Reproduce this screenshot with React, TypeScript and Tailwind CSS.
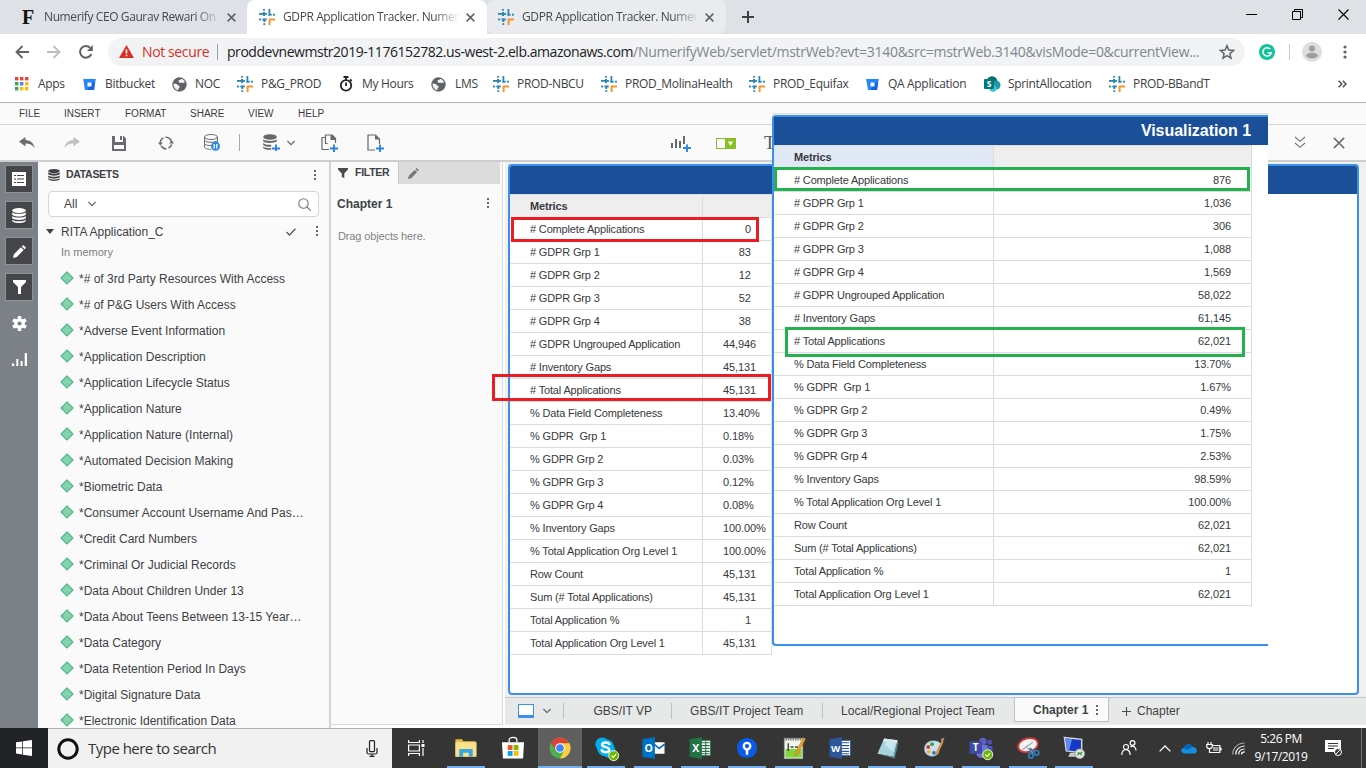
import React from "react";

type Row = [string, string];

const SEGOE = "font-['Open_Sans','Noto_Sans',sans-serif]";

const leftRows: Row[] = [
  ["# Complete Applications", "0"],
  ["# GDPR Grp 1", "83"],
  ["# GDPR Grp 2", "12"],
  ["# GDPR Grp 3", "52"],
  ["# GDPR Grp 4", "38"],
  ["# GDPR Ungrouped Application", "44,946"],
  ["# Inventory Gaps", "45,131"],
  ["# Total Applications", "45,131"],
  ["% Data Field Completeness", "13.40%"],
  ["% GDPR  Grp 1", "0.18%"],
  ["% GDPR Grp 2", "0.03%"],
  ["% GDPR Grp 3", "0.12%"],
  ["% GDPR Grp 4", "0.08%"],
  ["% Inventory Gaps", "100.00%"],
  ["% Total Application Org Level 1", "100.00%"],
  ["Row Count", "45,131"],
  ["Sum (# Total Applications)", "45,131"],
  ["Total Application %", "1"],
  ["Total Application Org Level 1", "45,131"],
];

const rightValues = [
  "876", "1,036", "306", "1,088", "1,569", "58,022", "61,145", "62,021", "13.70%", "1.67%",
  "0.49%", "1.75%", "2.53%", "98.59%", "100.00%", "62,021", "62,021", "1", "62,021",
];

const attributes = [
  "*# of 3rd Party Resources With Access",
  "*# of P&G Users With Access",
  "*Adverse Event Information",
  "*Application Description",
  "*Application Lifecycle Status",
  "*Application Nature",
  "*Application Nature (Internal)",
  "*Automated Decision Making",
  "*Biometric Data",
  "*Consumer Account Username And Pas…",
  "*Credit Card Numbers",
  "*Criminal Or Judicial Records",
  "*Data About Children Under 13",
  "*Data About Teens Between 13-15 Year…",
  "*Data Category",
  "*Data Retention Period In Days",
  "*Digital Signature Data",
  "*Electronic Identification Data",
];

/* ---------- small icons ---------- */

const Numerify = () => (
  <svg width="16" height="16" viewBox="0 0 16 16" className="shrink-0">
    <g fill="#2a86b8">
      <rect x="4" y="0" width="2" height="1.6" />
      <rect x="4" y="3" width="2" height="4" />
      <rect x="0" y="4" width="8" height="1.8" />
      <rect x="9.5" y="0" width="1.8" height="6.5" />
      <rect x="9.5" y="4.8" width="3.2" height="1.8" />
      <rect x="14" y="4.8" width="2" height="1.8" />
      <rect x="0" y="9.6" width="2" height="1.8" />
      <rect x="3.4" y="9.6" width="4.4" height="1.8" />
      <rect x="4.4" y="9.6" width="1.8" height="3.4" />
      <rect x="4.4" y="14.2" width="1.8" height="1.8" />
    </g>
    <path d="M9.6 9.4H16v2h-4.4V16h-2z" fill="#f7952b" />
  </svg>
);

const Apps = () => (
  <svg width="14" height="14" viewBox="0 0 14 14">
    {["#ea4335", "#ea4335", "#ea4335", "#34a853", "#4285f4", "#fbbc04", "#34a853", "#fbbc04", "#fbbc04"].map((c, i) => (
      <rect key={i} x={(i % 3) * 5} y={Math.floor(i / 3) * 5} width="3.4" height="3.4" fill={c} />
    ))}
  </svg>
);

const Bitbucket = () => (
  <svg width="13" height="13" viewBox="0 0 13 13">
    <path d="M.2 1h12.6L11 12H2z" fill="#2684ff" />
    <path d="M8.6 4.6h3.5L11 12H4.8z" fill="#1a62db" />
    <rect x="4.5" y="4.6" width="4" height="3.8" fill="#fff" />
  </svg>
);

const Globe = () => (
  <svg width="15" height="15" viewBox="0 0 15 15">
    <circle cx="7.5" cy="7.5" r="7.2" fill="#5f6368" />
    <path d="M1.600 6.500l3 .4c1.300.3.9 1.600 2.300 1.900 1.300.3.7 1.900.1 2.300-.7.5-.5 1.700-1 2.100C2.800 12.200 1.200 9.500 1.600 6.500zM7.200 3c1.500.1 1.200-1.300 2.600-1.100 1.500.6 2.700 1.800 3.200 3.400-.9.1-1.300.9-2.400.6-1.300-.4-3 .5-3.700-.7C6.500 4.200 6.400 3.200 7.200 3z" fill="#f4f4f4" />
  </svg>
);

const Stopwatch = () => (
  <svg width="14" height="16" viewBox="0 0 14 16" fill="none" stroke="#222" strokeWidth="1.8">
    <circle cx="7" cy="9.4" r="5.2" />
    <path d="M4.500 1h5M7 1v3M7 6.500v3.500M11 3.500l1.700 1.500" />
  </svg>
);

const SharePoint = () => (
  <svg width="17" height="16" viewBox="0 0 17 16">
    <circle cx="8" cy="5.500" r="5.300" fill="#036c70" />
    <circle cx="12" cy="9" r="4.500" fill="#1a9ba1" />
    <circle cx="9" cy="12.300" r="3.500" fill="#37c6d0" />
    <rect y="3" width="10" height="10" rx="1" fill="#03787c" />
    <text x="5" y="11" fontSize="8.500" fontWeight="700" fill="#fff" textAnchor="middle" fontFamily="Open Sans">S</text>
  </svg>
);

const Kebab = ({ c = "#66696c" }: { c?: string }) => (
  <svg width="2" height="11" viewBox="0 0 2 11" fill={c} className="shrink-0">
    <rect y="0" width="2" height="2" /><rect y="4" width="2" height="2" /><rect y="8" width="2" height="2" />
  </svg>
);

const Chevron = ({ c = "#66696c" }: { c?: string }) => (
  <svg width="8" height="6" viewBox="0 0 8 6" fill="none" stroke={c} strokeWidth="1.200" className="shrink-0"><path d="M.4 1l3.600 3.600L7.600 1" /></svg>
);

const Close = ({ c = "#5f6368", s = 9, w = 1.700 }: { c?: string; s?: number; w?: number }) => (
  <svg width={s} height={s} viewBox="0 0 10 10" stroke={c} strokeWidth={w} className="shrink-0"><path d="M.7.7l8.600 8.600M9.300.7L.7 9.300" /></svg>
);

const Cylinder = ({ c, w = 12, h = 12 }: { c: string; w?: number; h?: number }) => (
  <svg width={w} height={h} viewBox="0 0 12 12" fill={c} preserveAspectRatio="none" className="shrink-0">
    <ellipse cx="6" cy="2" rx="5.800" ry="2" />
    <path d="M.2 3.300C1.800 5 10.200 5 11.800 3.300v2C10.200 7.200 1.800 7.200.2 5.300zM.2 6.400c1.600 1.700 10 1.700 11.600 0v1.800c-1.600 1.800-10 1.800-11.600 0zM.2 9.300c1.600 1.700 10 1.700 11.600 0v1c-1.600 2.200-10 2.200-11.600 0z" />
  </svg>
);

/* ---------- browser chrome ---------- */

const tabText = `${SEGOE} text-[12px] whitespace-pre text-[#45494d] tracking-[-0.400px] [mask-image:linear-gradient(to_right,#000_85%,transparent)]`;

const TabStrip = () => (
  <div className="flex h-[34px] shrink-0 bg-[#dee1e6]">
    <div className="flex w-[247px] items-center pl-[22px]">
      <span className="w-[22px] font-['Liberation_Serif',serif] text-[20px] leading-none font-bold text-[#111]">F</span>
      <span className={`${tabText} w-[177px]`}>Numerify CEO Gaurav Rewari On</span>
      <span className="ml-[6px]"><Close /></span>
    </div>
    <div className="flex w-[240px] items-center rounded-t-lg bg-white pl-3">
      <Numerify />
      <span className={`${tabText} ml-2 w-[177px]`}>GDPR Application Tracker. Numer</span>
      <span className="ml-[6px]"><Close /></span>
    </div>
    <div className="flex w-[239px] items-center rounded-lg bg-[#e9ebef] pl-[11px]">
      <Numerify />
      <span className={`${tabText} ml-2 w-[177px]`}>GDPR Application Tracker. Numer</span>
      <span className="ml-[6px]"><Close /></span>
    </div>
    <svg className="mt-[11px] ml-4" width="12" height="12" viewBox="0 0 12 12" stroke="#3c4043" strokeWidth="2"><path d="M6 0v12M0 6h12" /></svg>
    <div className="mt-[9px] ml-auto flex h-[11px] gap-[35px] pr-[17px]">
      <svg width="11" height="11" stroke="#000"><path d="M0 5.500h11" /></svg>
      <svg width="11" height="11" viewBox="0 0 11 11" fill="none" stroke="#000"><path d="M.5 2.500h8v8h-8zM2.500 2.500v-2h8v8h-2" /></svg>
      <svg width="11" height="11" stroke="#000" strokeWidth="1.100"><path d="M.5.5l10 10M10.500.5l-10 10" /></svg>
    </div>
  </div>
);

const AddressRow = () => (
  <div className="flex h-[36px] shrink-0 items-center bg-white">
    <svg className="ml-[15px]" width="14" height="14" viewBox="0 0 14 14" fill="none" stroke="#5f6368" strokeWidth="1.800"><path d="M14 7H1.500M7.500 1L1.500 7l6 6" /></svg>
    <svg className="ml-[18px]" width="14" height="14" viewBox="0 0 14 14" fill="none" stroke="#bcbec0" strokeWidth="1.800"><path d="M0 7h12.500M6.500 1l6 6-6 6" /></svg>
    <svg className="ml-[18px]" width="14" height="14" viewBox="0 0 14 14" fill="none" stroke="#5f6368" strokeWidth="2"><path d="M12.300 9A5.800 5.800 0 1 1 11.200 2.900" /><path d="M13.800 0v6H8z" fill="#5f6368" stroke="none" /></svg>
    <div className={`ml-[15px] flex h-7 w-[1137px] items-center rounded-full bg-[#f1f3f4] text-[14px] ${SEGOE}`}>
      <svg className="mb-px ml-[11px] shrink-0" width="15" height="13" viewBox="0 0 15 13"><path d="M7.500 0L15 13H0z" fill="#d93025" /><path d="M7.500 4.500v4M7.500 9.700v1.500" stroke="#fff" strokeWidth="1.600" /></svg>
      <span className="ml-[8px] w-[75px] shrink-0 pb-px whitespace-nowrap text-[#d93025] tracking-[-0.380px]">Not secure</span>
      <span className="h-4 w-px shrink-0 bg-[#9aa0a6]" />
      <span className="ml-[9px] w-[990px] pb-px whitespace-nowrap text-[#202124] tracking-[-0.450px]">
        proddevnewmstr2019-1176152782.us-west-2.elb.amazonaws.com<span className="tracking-[-0.280px] text-[#80868b]">/NumerifyWeb/servlet/mstrWeb?evt=3140&amp;src=mstrWeb.3140&amp;visMode=0&amp;currentView...</span>
      </span>
      <svg className="mr-[10px] ml-auto shrink-0" width="16" height="16" viewBox="0 0 16 16" fill="none" stroke="#5f6368" strokeWidth="1.500"><path d="M8 1.700l1.800 4.400 4.700.4-3.600 3.100 1.100 4.600L8 11.700l-4 2.500 1.100-4.600L1.500 6.500l4.700-.4z" /></svg>
    </div>
    <svg className="ml-[14px]" width="16" height="16" viewBox="0 0 16 16" fill="none"><circle cx="8" cy="8" r="8" fill="#15c39a" /><path d="M11.200 5A4.200 4.200 0 1 0 12 9.500V8.700H8.600" stroke="#fff" strokeWidth="1.500" /></svg>
    <span className="ml-[14px] h-4 w-px bg-[#c8cacd]" />
    <svg className="ml-[12px]" width="20" height="20" viewBox="0 0 20 20"><circle cx="10" cy="10" r="10" fill="#dedede" /><circle cx="10" cy="6.500" r="3" fill="#9c9ea1" /><path d="M4 13.500c1-3.700 11-3.700 12 0-1.500 4-10.500 4-12 0z" fill="#9c9ea1" /></svg>
    <svg className="ml-[21px]" width="4" height="14" fill="#5f6368"><circle cx="2" cy="2" r="1.600" /><circle cx="2" cy="7" r="1.600" /><circle cx="2" cy="12" r="1.600" /></svg>
  </div>
);

const bookmarks: [string, React.ReactNode, string, string][] = [
  ["Apps", <Apps />, "w-[68px]", "w-[23px]"],
  ["Bitbucket", <Bitbucket />, "w-[89px]", "w-[22px]"],
  ["NOC", <Globe />, "w-[65px]", "w-[23px]"],
  ["P&G_PROD", <Numerify />, "w-[102px]", "w-[24px]"],
  ["My Hours", <Stopwatch />, "w-[92px]", "w-[23px]"],
  ["LMS", <Globe />, "w-[62px]", "w-[24px]"],
  ["PROD-NBCU", <Numerify />, "w-[108px]", "w-[24px]"],
  ["PROD_MolinaHealth", <Numerify />, "w-[148px]", "w-[24px]"],
  ["PROD_Equifax", <Numerify />, "w-[117px]", "w-[24px]"],
  ["QA Application", <Bitbucket />, "w-[118px]", "w-[22px]"],
  ["SprintAllocation", <SharePoint />, "w-[125px]", "w-[24px]"],
  ["PROD-BBandT", <Numerify />, "w-[120px]", "w-[24px]"],
];

const Bookmarks = () => (
  <div className={`flex h-[32px] shrink-0 items-center bg-white pb-[4px] pl-[15px] text-[12px] tracking-[-0.320px] text-[#3c4043] ${SEGOE}`}>
    {bookmarks.map(([t, icon, w, iw]) => (
      <div key={t} className={`flex shrink-0 items-center ${w}`}>
        <span className={`flex shrink-0 ${iw}`}>{icon}</span>
        <span className="whitespace-nowrap">{t}</span>
      </div>
    ))}
    <svg className="mr-[19px] ml-auto" width="9" height="8" viewBox="0 0 9 8" fill="none" stroke="#4c5054" strokeWidth="1.500"><path d="M.6.8L3.800 4 .6 7.200M4.800.8L8 4 4.800 7.200" /></svg>
  </div>
);

/* ---------- application bars ---------- */

const menus: [string, string][] = [["FILE", "w-[45px]"], ["INSERT", "w-[61px]"], ["FORMAT", "w-[65px]"], ["SHARE", "w-[58px]"], ["VIEW", "w-[50px]"], ["HELP", "w-[40px]"]];

const MenuBar = () => (
  <div className="flex h-[23px] shrink-0 items-center border-t border-b border-t-[#b3b3b3] border-b-[#d6d6d6] bg-[#fafafa] pl-[19px] text-[10px] text-[#3a3d40]">
    {menus.map(([m, w]) => <span key={m} className={w}>{m}</span>)}
  </div>
);

const Plus = () => <path d="M13 10.500v8M9 14.500h8" stroke="#2b83dd" strokeWidth="1.900" />;

const Toolbar = () => (
  <div className="flex h-[37px] shrink-0 items-center border-b-2 border-[#cfcfcf] bg-[#fafafa]">
    <svg className="ml-[19px]" width="16" height="14" viewBox="0 0 16 14" fill="#6b6d70"><path d="M0 5.500L6.500 1v3c5 .3 8 3 9.300 8C13 8.700 10 7.300 6.500 7.500v3z" /></svg>
    <svg className="ml-[29px]" width="16" height="14" viewBox="0 0 16 14" fill="#bfc0c1"><path d="M16 5.500L9.500 1v3c-5 .3-8 3-9.300 8C3 8.700 6 7.300 9.500 7.500v3z" /></svg>
    <svg className="mt-px ml-[32px]" width="14" height="15" viewBox="0 0 14 15"><path d="M0 0h3v6h8V0h.8L14 2.500V15H0z" fill="#696b6e" /><path d="M8 0h2v4H8z" fill="#696b6e" /><path d="M2 9h10v4H2z" fill="#fafafa" /></svg>
    <svg className="ml-[32px]" width="16" height="16" viewBox="0 0 16 16" fill="none" stroke="#6b6d70" strokeWidth="1.500"><path d="M2.300 8.500A5.700 5.700 0 0 1 5.500 2.900M7.500 2.300A5.700 5.700 0 0 1 13.700 7.500M13.600 9.500A5.700 5.700 0 0 1 10.500 13.100M8.500 13.700A5.700 5.700 0 0 1 3.200 11" /><path d="M0 7.500h4.800L2.400 10.700zM16 8.500h-4.800L13.600 5.300z" fill="#6b6d70" stroke="none" /></svg>
    <svg className="ml-[30px]" width="17" height="17" viewBox="0 0 17 17" fill="none" stroke="#6b6d70"><ellipse cx="7" cy="3" rx="6.500" ry="2.500" /><path d="M.5 3v10c0 1.400 3 2.300 6.500 2.300M13.500 3v6M.5 6.300C2 9 12 9 13.500 6.300M.5 9.700c1 1.500 4 2 6.500 1.800" /><circle cx="11.500" cy="12.200" r="4.500" fill="#2f87e3" stroke="none" /><path d="M10.200 10v4.500M12.800 10v4.500" stroke="#fff" strokeWidth="1.300" /></svg>
    <span className="ml-[18px] h-[17px] w-px bg-[#a9a9a9]" />
    <svg className="ml-[23px]" width="17" height="17" viewBox="0 0 17 17"><g fill="#66686b"><ellipse cx="7" cy="3" rx="6.800" ry="2.700" /><path d="M.2 5.300c1.500 2.300 12 2.300 13.600 0v2C12 9.200 2 9.600.2 7.300zM.2 9c1.500 1.700 5 2 8 1.700v2c-3 .4-6.500 0-8-1.600zM.2 12.500c1.500 1.500 5 1.700 8 1.500v1.700c-4 .3-7-.4-8-1.700z" /></g><Plus /></svg>
    <span className="mt-px ml-[7px]"><Chevron /></span>
    <svg className="ml-[26px]" width="18" height="18" viewBox="0 0 18 18" fill="none" stroke="#66686b" strokeWidth="1.200"><path d="M4.500 3.500H1v12h7M4.500 10V1h6.700L14.500 4.500V9M4.500 9.500h2" /><path d="M9.500 1h2l3 3v2H9.500z" fill="#66686b" stroke="none" /><Plus /></svg>
    <svg className="ml-[28px]" width="17" height="18" viewBox="0 0 17 18" fill="none" stroke="#66686b" strokeWidth="1.200"><path d="M8 16H1V1h7.500L12.500 5v5" /><path d="M8 1l4.500 4.500H8z" fill="#66686b" stroke="none" /><Plus /></svg>
    <svg className="ml-[287px]" width="20" height="18" viewBox="0 0 20 18" fill="#66686b"><path d="M0 9h2v5H0zM4 5h2v9H4zM8 7h2v7H8zM12 2h2v8h-2z" /><path d="M16 10.500v8M12 14h8" stroke="#2b83dd" strokeWidth="1.900" /></svg>
    <svg className="mt-px ml-[25px]" width="20" height="11" viewBox="0 0 20 11"><rect x=".5" y=".5" width="19" height="10" fill="#fff" stroke="#86c024" /><rect x="9" width="11" height="11" fill="#86c024" /><path d="M12 3.500h5L14.500 8z" fill="#fff" /></svg>
    <span className="ml-[28px] w-4 font-['Liberation_Serif',serif] text-[19px] leading-none text-[#55585b]">T</span>
    <svg className="ml-auto" width="12" height="13" viewBox="0 0 12 13" fill="none" stroke="#707274" strokeWidth="1.100"><path d="M1 1l5 4.300L11 1M1 7l5 4.300L11 7" /></svg>
    <span className="mr-[21px] ml-[27px]"><Close c="#707274" s={12} w={1.400} /></span>
  </div>
);

/* ---------- side panels ---------- */

const railBox = "flex h-[28px] w-[28px] items-center justify-center";
const railDark = "border border-[#8e9397] bg-[#454649]";

const Rail = () => (
  <div className="flex w-[38px] shrink-0 flex-col items-center gap-2 bg-[#7b8187] pt-[3px]">
    <div className={`${railBox} ${railDark}`}>
      <svg width="14" height="14" viewBox="0 0 14 14"><rect width="14" height="14" fill="#fff" /><path d="M2 3.500h2M5 3.500h7M2 7h2M5 7h7M2 10.500h2M5 10.500h7" stroke="#454649" strokeWidth="1.200" /></svg>
    </div>
    <div className={`${railBox} ${railDark}`}><Cylinder c="#fff" w={14} h={15} /></div>
    <div className={`${railBox} ${railDark}`}>
      <svg width="13" height="13" viewBox="0 0 14 14" fill="#fff"><path d="M0 14l1-4L8.500 2.500l3 3L4 13zM9.500 1.500L11 0l3 3-1.500 1.500z" /></svg>
    </div>
    <div className={`${railBox} ${railDark}`}><svg width="13" height="14" viewBox="0 0 13 14" fill="#fff"><path d="M0 0h13v2L8 7v7H5V7L0 2z" /></svg></div>
    <div className={railBox}>
      <svg width="15" height="15" viewBox="0 0 15 15"><g fill="#fff"><circle cx="7.500" cy="7.500" r="5.300" />{[0, 60, 120].map((a) => <rect key={a} x="5.700" y="0" width="3.600" height="15" rx=".8" transform={`rotate(${a} 7.500 7.500)`} />)}</g><circle cx="7.500" cy="7.500" r="2.100" fill="#7b8187" /></svg>
    </div>
    <div className={railBox}><svg width="15" height="13" viewBox="0 0 15 13" fill="#fff"><path d="M0 10.500h2.200V13H0zM4.300 6h2v7h-2zM8.600 8h2v5h-2zM12.700 0H15v13h-2.300z" /></svg></div>
  </div>
);

const Datasets = () => (
  <div className="flex w-[293px] shrink-0 flex-col overflow-hidden border-r-2 border-[#d2d3d4] bg-[#fafafa] text-[#3d4145]">
    <div className="mt-px flex h-[24px] shrink-0 items-center pr-[13px] pl-[10px]">
      <Cylinder c="#3f4245" w={12} h={12} />
      <span className="ml-[6px] text-[10.500px] font-bold tracking-[-0.300px]">DATASETS</span>
      <span className="ml-auto"><Kebab /></span>
    </div>
    <div className="mt-[4px] ml-[10px] flex h-[26px] w-[271px] shrink-0 items-center rounded border border-[#d4d5d6] bg-white pl-[15px] text-[12px]">
      <span className="w-6">All</span>
      <Chevron />
      <svg className="mr-[7px] ml-auto" width="13" height="13" viewBox="0 0 13 13" fill="none" stroke="#75787b" strokeWidth="1.100"><circle cx="5.500" cy="5.500" r="4.700" /><path d="M9 9l3.700 3.700" /></svg>
    </div>
    <div className="mt-[3px] flex h-[24px] shrink-0 items-center pr-[11px] pb-px pl-[8px]">
      <svg width="8" height="5" fill="#3f4245"><path d="M0 0h8L4 5z" /></svg>
      <span className="ml-[7px] text-[12px]">RITA Application_C</span>
      <svg className="ml-auto" width="10" height="8" viewBox="0 0 10 8" fill="none" stroke="#55585b" strokeWidth="1.300"><path d="M.5 4l3 3L9.500.7" /></svg>
      <span className="ml-[20px]"><Kebab /></span>
    </div>
    <div className="mb-px flex h-[21px] shrink-0 items-start pl-[23px] text-[11px] leading-[16px] text-[#7b7e81]">In memory</div>
    {attributes.map((a) => (
      <div key={a} className="flex h-[26px] shrink-0 items-center pl-[22px] text-[12px] whitespace-nowrap">
        <svg className="mr-[5px] mb-[2px] shrink-0" width="14" height="14" viewBox="0 0 14 14"><path d="M7 1l6 6-6 6-6-6z" fill="#85d3ae" stroke="#4fb887" strokeWidth="1.200" /></svg>
        {a}
      </div>
    ))}
  </div>
);

const Filter = () => (
  <div className="mb-[3px] flex w-[172px] shrink-0 flex-col border-r border-b border-[#d9dadb] bg-[#fafafa] text-[#3d4145]">
    <div className="flex h-[22px] pr-[2px]">
      <div className="flex w-[67px] items-center pl-[7px]">
        <svg width="10" height="10" viewBox="0 0 10 10" fill="#4a4d50"><path d="M0 0h10v1.500L6.300 5.500V10l-2.500-1V5.500L0 1.500z" /></svg>
        <span className="ml-[7px] text-[10.500px] font-bold tracking-[-0.280px]">FILTER</span>
      </div>
      <div className="flex flex-1 items-center border-l border-[#c9caca] bg-[#dcdcdc] pl-[9px]">
        <svg width="11" height="11" viewBox="0 0 14 14" fill="#777"><path d="M0 14l1-4L8.500 2.500l3 3L4 13zM9.500 1.500L11 0l3 3-1.500 1.500z" /></svg>
      </div>
    </div>
    <div className="mt-[9px] flex h-[22px] items-center pr-[13px] pl-[6px]">
      <span className="text-[12px] font-bold">Chapter 1</span>
      <span className="ml-auto pb-[2px]"><Kebab /></span>
    </div>
    <div className="mt-[11px] pl-[7px] text-[11px] leading-[20px] tracking-[-0.130px] text-[#7f8285]">Drag objects here.</div>
  </div>
);

/* ---------- grids ---------- */

const leftAlign = (v: string) =>
  /[,%]/.test(v)
    ? "flex w-[68px] items-center pl-5 tracking-[-0.120px]"
    : "flex w-[68px] items-center justify-end pr-5";

const LeftGrid = () => (
  <div className="w-[262px] border-t border-r border-[#dcdcdc] text-[11px] whitespace-pre text-[#37393c]">
    <div className="flex h-[23px] border-b border-[#dcdcdc] bg-[#eeeeee] font-bold">
      <span className="flex w-[193px] shrink-0 items-center border-r border-[#dcdcdc] pl-5 tracking-[-0.150px]">Metrics</span>
    </div>
    {leftRows.map(([n, v]) => (
      <div key={n} className="flex h-[23px] border-b border-[#dcdcdc]">
        <span className="flex w-[193px] shrink-0 items-center border-r border-[#dcdcdc] pl-5 tracking-[-0.160px]">{n}</span>
        <span className={leftAlign(v)}>{v}</span>
      </div>
    ))}
  </div>
);

const RightGrid = () => (
  <div className="w-[478px] border-t border-r border-[#dcdcdc] text-[11px] whitespace-pre text-[#37393c]">
    <div className="flex h-[23px] border-b border-[#dcdcdc] bg-[#eeeeee] font-bold">
      <span className="flex w-[220px] items-center border-r border-[#dcdcdc] bg-[#e1e8f5] pl-5 tracking-[-0.150px]">Metrics</span>
    </div>
    {leftRows.map(([n], i) => (
      <div key={n} className="flex h-[23px] border-b border-[#dcdcdc]">
        <span className="flex w-[220px] items-center border-r border-[#dcdcdc] pl-5 tracking-[-0.160px]">{n}</span>
        <span className="flex flex-1 items-center justify-end pr-5 tracking-[-0.100px]">{rightValues[i]}</span>
      </div>
    ))}
  </div>
);

const ChapterBar = () => (
  <div className="mb-[3px] flex h-[28px] shrink-0 border-t border-b border-t-[#c5c6c7] border-b-[#eeeeee] bg-[#e7e9e8] text-[12px] whitespace-nowrap text-[#3d4145]">
    <div className="my-auto flex h-[16px] w-[59px] items-center border-r border-[#bfc1c2] pl-[13px]">
      <span className="h-[14px] w-4 border border-b-[3px] border-[#3a90ea] bg-white" />
      <span className="ml-[9px]"><Chevron /></span>
    </div>
    <div className="my-auto flex h-[16px] w-[108px] items-center border-r border-[#bfc1c2] pl-[29.500px]">GBS/IT VP</div>
    <div className="my-auto flex h-[16px] w-[151px] items-center border-r border-[#bfc1c2] pl-[18px] tracking-[0.050px]">GBS/IT Project Team</div>
    <div className="my-auto flex h-[16px] w-[191px] items-center pl-[18px] tracking-[0.050px]">Local/Regional Project Team</div>
    <div className="-mt-px flex h-[25px] w-[95px] items-center border border-[#bfc1c2] bg-[#fafafa] pt-px pl-[18px] font-bold">
      Chapter 1<span className="ml-[8px]"><Kebab /></span>
    </div>
    <div className="flex items-center pl-[13px]">
      <svg width="9" height="9" stroke="#4a4d50" strokeWidth="1.100"><path d="M4.500 0v9M0 4.500h9" /></svg>
      <span className="ml-[6px]">Chapter</span>
    </div>
  </div>
);

const Canvas = () => (
  <div className="flex min-w-0 flex-1 flex-col">
    <div className="ml-[2px] flex min-h-0 flex-1 flex-col bg-[#f0f0f0] pt-[2px] pr-[7px] pb-[2px] pl-[3px]">
      <div className="flex-1 overflow-hidden rounded border-2 border-[#3a90ea] bg-white">
        <div className="h-[28px] bg-[#1b5099]" />
        <LeftGrid />
      </div>
    </div>
    <div className="ml-[2px]"><ChapterBar /></div>
  </div>
);

/* Second visualization floating over the dossier, together with the review marks. */
const Overlay = () => (
  <>
    <div className="absolute top-[113px] left-[772px] flex h-[533px] w-[496px] flex-col border-t border-[#dedede] bg-[#f0f0f0] pt-px">
      <div className="flex-1 rounded-l border-2 border-r-0 border-[#3a90ea] bg-white">
        <div className="flex h-[28px] items-center justify-end bg-[#1b5099] pr-[17px] text-[16px] font-bold tracking-[-0.050px] text-white">Visualization 1</div>
        <RightGrid />
      </div>
    </div>
    <div className="absolute top-[217px] left-[511px] h-[25px] w-[248px] border-3 border-[#ed1c24]" />
    <div className="absolute top-[374px] left-[492px] h-[27px] w-[279px] border-3 border-[#ed1c24]" />
    <div className="absolute top-[167px] left-[774px] h-[24px] w-[476px] border-3 border-[#22b14c]" />
    <div className="absolute top-[327px] left-[785px] h-[30px] w-[460px] border-3 border-[#22b14c]" />
  </>
);

/* ---------- taskbar ---------- */

const Letter = ({ x, y, s, children }: { x: number; y: number; s: number; children: string }) => (
  <text x={x} y={y} fontSize={s} fontWeight="700" fill="#fff" textAnchor="middle" fontFamily="Open Sans">{children}</text>
);

const Check = ({ x, y }: { x: number; y: number }) => (
  <g><circle cx={x} cy={y} r="5.200" fill="#6bb700" stroke="#fff" strokeWidth=".9" /><path d={`M${x - 2.300} ${y}l1.700 1.700 3-3.200`} fill="none" stroke="#fff" strokeWidth="1.300" /></g>
);

const taskIcons: React.ReactNode[] = [
  <g key="explorer"><path d="M1 3h7l1 2h13v16H1z" fill="#e8bd4a" /><path d="M1 6h22v15H1z" fill="#fbe08c" /><path d="M5 21v-8h14v8h-4v-4H9v4z" fill="#38a8e0" /></g>,
  <g key="store"><path d="M8 6V3.500C8 0 16 0 16 3.500V6" fill="none" stroke="#fff" strokeWidth="1.300" /><path d="M.5 6h23L22.500 23H1.500z" fill="#fff" /><path d="M6.500 9h5v5h-5z" fill="#f25022" /><path d="M12.700 9h5v5h-5z" fill="#7fba00" /><path d="M6.500 15.200h5v5h-5z" fill="#00a4ef" /><path d="M12.700 15.200h5v5h-5z" fill="#ffb900" /></g>,
  <g key="chrome"><circle cx="12" cy="12" r="11" fill="#4caf50" /><path d="M12 12L2.500 6.500A11 11 0 0 1 21.500 6.500z" fill="#db4437" /><path d="M12 7h9.800A11 11 0 0 1 12 23l4.300-8.500z" fill="#ffcd40" /><path d="M2.500 6.500L7.700 14.500 12 7z" fill="#db4437" /><circle cx="12" cy="12" r="5" fill="#fff" /><circle cx="12" cy="12" r="4" fill="#4285f4" /></g>,
  <g key="skype"><circle cx="8" cy="8" r="7" fill="#00aff0" /><circle cx="15" cy="15" r="7" fill="#00aff0" /><circle cx="11.500" cy="11.500" r="9" fill="#00aff0" /><path d="M15.500 7.800C13.500 5.300 7.800 5.800 8 8.700c.2 3 7.500 1.800 7.500 5.200 0 3.200-6.500 3.300-8 .3" fill="none" stroke="#fff" strokeWidth="2.600" strokeLinecap="round" /><Check x={20} y={20} /></g>,
  <g key="outlook"><path d="M12 6h12v12H12z" fill="#fff" /><path d="M13 8l5.500 4.500L24 8" fill="none" stroke="#0072c6" strokeWidth="1.800" /><path d="M1 3l13-2.500v23L1 21z" fill="#0072c6" /><Letter x={7.5} y={16} s={11}>O</Letter></g>,
  <g key="excel"><path d="M12 4h11v16H12z" fill="#fff" stroke="#217346" /><path d="M14 6.500h8M14 9.500h8M14 12.500h8M14 15.500h8M14 18h8M18 5v15" stroke="#217346" strokeWidth="1.100" /><path d="M1 3l13-2.500v23L1 21z" fill="#217346" /><Letter x={7.5} y={16.200} s={11}>X</Letter></g>,
  <g key="sourcetree"><circle cx="12" cy="12" r="10.500" fill="#0b5bea" /><circle cx="12" cy="10" r="3.400" fill="none" stroke="#fff" strokeWidth="2.400" /><path d="M12 14v5" stroke="#fff" strokeWidth="2.600" /></g>,
  <g key="npp"><path d="M2 2h19v21H2z" fill="#f5f5ee" stroke="#aaa" /><path d="M3 13h17v9H3z" fill="#83d33c" /><path d="M3 3h17" stroke="#777" strokeWidth="2.500" strokeDasharray="1.500 1" /><path d="M6 7v8M8.500 11h3M13 11h3" stroke="#344" strokeWidth="1.500" /><path d="M22 1l2 1.500L16 18l-3 2 .5-3.500z" fill="#e8a424" stroke="#a8641a" strokeWidth=".5" /></g>,
  <g key="word"><path d="M12 4h11v16H12z" fill="#fff" stroke="#2b579a" /><path d="M14 6.500h7.500M14 9.500h7.500M14 12.500h7.500M14 15.500h7.500M14 18h7.500" stroke="#2b579a" strokeWidth="1.100" /><path d="M1 3l13-2.500v23L1 21z" fill="#2b579a" /><Letter x={7.5} y={15.800} s={10}>W</Letter></g>,
  <g key="notepad"><path d="M9 2l14 2-4 17-17-3z" fill="#a6d3dd" /><path d="M9 2l14 2-1 3L8 5z" fill="#dfeaec" /><path d="M2 18l17 3 4-17 .7 3L20 23z" fill="#5e8894" /><path d="M13 4l8 2-3 10-9-8z" fill="#c8e7ee" /></g>,
  <g key="paint"><path d="M2 13C2 6 9 3 15 5c5 1.500 5 5 2.500 6.500-2 1.500 1 3-1 6C13 23 2 21 2 13z" fill="#c9e1ef" stroke="#7ea7bd" strokeWidth=".6" /><circle cx="6" cy="11" r="2" fill="#d9362b" /><circle cx="10" cy="8" r="2" fill="#38a34a" /><circle cx="6.500" cy="16" r="2" fill="#edb52c" /><circle cx="12" cy="17" r="2" fill="#3670c2" /><path d="M14 19L21 5" stroke="#da9144" strokeWidth="2.500" /><path d="M21 6l-2-3 4-2z" fill="#c49a6b" /></g>,
  <g key="teams"><circle cx="14" cy="5" r="3.800" fill="#5b62c4" /><circle cx="21" cy="6" r="2.600" fill="#4b53bc" /><path d="M17 10h7v8c-2 3-5 3-7 1z" fill="#4b53bc" /><path d="M7 9h12v9c-1 6-11 6-12 0z" fill="#6b73d3" /><path d="M0 5h13v13H0z" fill="#4048a8" /><Letter x={6.500} y={15.500} s={10.500}>T</Letter><Check x={19} y={19} /></g>,
  <g key="snip"><ellipse cx="12" cy="9" rx="10.500" ry="7" transform="rotate(-15 12 9)" fill="#f3f3f3" stroke="#d33a35" strokeWidth="2" /><path d="M6 14l11-8M10 11l7 6" stroke="#aab0b4" strokeWidth="1.500" /><circle cx="15" cy="20" r="2.400" fill="none" stroke="#2d7bb8" strokeWidth="1.800" /><circle cx="21" cy="17" r="2.400" fill="none" stroke="#2d7bb8" strokeWidth="1.800" /><path d="M15 17.500L14 12M18.500 16L14 12" stroke="#2d7bb8" strokeWidth="1.500" /></g>,
  <g key="rdp"><path d="M2 1l18 2v14L4 15z" fill="#1637c8" stroke="#d5d9de" strokeWidth="1.500" /><path d="M3 2l7 1L7 14.500l-2.300-.3z" fill="#5c8cf0" /><path d="M8 17h8v4H6z" fill="#c8cdd2" /><circle cx="18" cy="18" r="5" fill="#dfe8dc" stroke="#98a296" /><path d="M15.500 19.500l2-2-1.500-1M20.500 16l-2 2 1.500 1.500" fill="none" stroke="#2b8c38" strokeWidth="1.200" /></g>,
];

const Taskbar = () => (
  <div className={`flex h-[40px] shrink-0 bg-[#353535] ${SEGOE}`}>
    <div className="flex w-[48px] shrink-0 items-center justify-center bg-[#212326]">
      <svg width="16" height="16" viewBox="0 0 16 16" fill="#fff"><path d="M0 2.300L6.300 1.400v6.200H0zM7 1.300L16 0v7.600H7zM0 8.300h6.300v6.200L0 13.600zM7 8.300h9V16l-9-1.300z" /></svg>
    </div>
    <div className="flex w-[344px] shrink-0 items-center border-t border-[#b4b4b4] bg-[#f1f1f1] pl-[9px]">
      <svg width="22" height="22"><circle cx="11" cy="11" r="9.200" fill="none" stroke="#111" strokeWidth="3" /></svg>
      <span className="ml-[9px] text-[15px] tracking-[-0.520px] text-[#333]">Type here to search</span>
      <svg className="mr-[14px] ml-auto" width="12" height="17" viewBox="0 0 12 17" fill="none" stroke="#222" strokeWidth="1.200"><rect x="3.500" y=".6" width="5" height="11" rx="1" /><path d="M1 8v4.500c0 1 1 1.500 2 1.500h6c1 0 2-.5 2-1.500V8M6 14v2.400M3.500 16.400h5" /></svg>
    </div>
    <div className="flex w-[50.600px] shrink-0 items-center pl-[16px]">
      <svg width="17" height="16" viewBox="0 0 17 16" fill="none" stroke="#fff" strokeWidth="1.200"><path d="M.6 0v2.500h10.800V0M.6 5h10.800v6H.6zM.6 16v-2.500h10.800V16M15 0v3M15 8v8" /><path d="M13.500 4h3v3h-3z" fill="#fff" stroke="none" /></svg>
    </div>
    {taskIcons.map((icon, i) => (
      <div key={i} className="flex w-[46.800px] shrink-0 justify-center">
        <div className={`flex flex-col items-center justify-end ${i === 2 ? "w-[44px] bg-[#5f5f5f]" : "w-[38px]"}`}>
          <svg width="24" height="24" viewBox="-0.5 -0.5 25 25" className="mb-[6px] overflow-visible">{icon}</svg>
          <span className={`h-[2px] w-full ${i === 1 ? "bg-transparent" : "bg-[#76b0ee]"}`} />
        </div>
      </div>
    ))}
    <div className="ml-auto flex w-[245px] shrink-0 items-center text-white">
      <svg width="16" height="16" viewBox="0 0 16 16" fill="none" stroke="#fff" strokeWidth="1.200"><circle cx="5" cy="7" r="2.500" /><path d="M.8 15c0-7 8.400-7 8.400 0" /><circle cx="11.500" cy="3" r="2.400" /><path d="M9.500 7c2.500-2 5.500 0 5.500 3.500" /></svg>
      <svg className="ml-[22px]" width="12" height="7" fill="none" stroke="#fff" strokeWidth="1.300"><path d="M.6 6.400L6 1l5.400 5.400" /></svg>
      <svg className="ml-[10px]" width="16" height="11" viewBox="0 0 16 11"><path d="M3.500 10.500C-1 10-.5 5 3 5 4 .5 10 0 11.500 4c4.500-.5 6 6 2 6.500z" fill="#1490df" /><path d="M3 5C4 .5 10 0 11.500 4L6 7z" fill="#0364b8" /></svg>
      <svg className="ml-[9px]" width="16" height="12" viewBox="0 0 16 12" fill="none" stroke="#fff" strokeWidth="1.200"><path d="M6.500 3.500h7.300v7H3.500V7M2 0v2.500M5 0v2.500M.8 2.500h5.400v2c0 1.500-1 2-2.700 2s-2.700-.5-2.700-2zM15 5.500v3" /><path d="M7 5h5.500v4H7z" fill="#9b9b9b" stroke="none" /></svg>
      <svg className="ml-[10px]" width="13" height="13" viewBox="0 0 13 13" fill="none" stroke="#fff" strokeWidth="1.200"><path d="M.7 12.500C.7 6 6 1 12.700 1" opacity=".55" /><path d="M3.700 12.500c0-5 4-8.500 9-8.500M6.700 12.500c0-3.500 2.500-5.500 6-5.500M9.500 12.500c0-1.500 1.500-2.700 3.200-2.700" /></svg>
      <div className="ml-[8px] w-[56px] text-center text-[12px] leading-[18px] tracking-[-0.450px] whitespace-nowrap">5:26 PM<br />9/17/2019</div>
      <svg className="ml-[16px]" width="17" height="16" viewBox="0 0 17 16"><path d="M0 0h16v12h-3v4l-4-4H0z" fill="#fff" /><path d="M3 3.500h10M3 6h10M3 8.500h6" stroke="#353535" strokeWidth="1.100" /><circle cx="13" cy="12" r="3.500" fill="#353535" stroke="#fff" /><path d="M10.500 14.500l5-5" stroke="#fff" /></svg>
      <span className="mr-[4px] ml-auto h-full w-px bg-[#707070]" />
    </div>
  </div>
);

export default function App() {
  return (
    <div className="relative flex h-[768px] w-[1366px] flex-col overflow-hidden bg-white font-['Liberation_Sans',Arial,sans-serif]">
      <TabStrip />
      <AddressRow />
      <Bookmarks />
      <MenuBar />
      <Toolbar />
      <div className="flex min-h-0 flex-1">
        <Rail />
        <Datasets />
        <Filter />
        <Canvas />
      </div>
      <Overlay />
      <Taskbar />
    </div>
  );
}
